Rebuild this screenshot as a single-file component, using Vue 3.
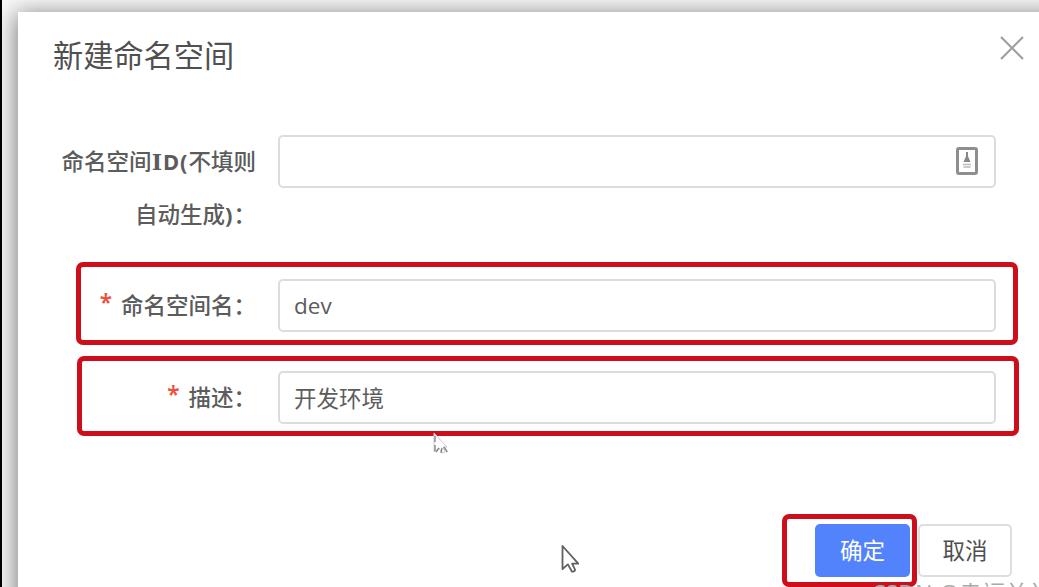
<script setup>
import { ref } from 'vue'

const namespaceId = ref('')
const fields = ref([
  { key: 'name', label: '命名空间名：', value: 'dev' },
  { key: 'desc', label: '描述：', value: '开发环境' }
])
</script>

<template>
  <div class="page">
    <section class="dialog">
      <header class="dialog-header">
        <h1 class="title">新建命名空间</h1>
        <svg class="close" viewBox="0 0 24 24" width="24" height="24">
          <path d="M1 1L23 23M23 1L1 23" />
        </svg>
      </header>

      <div class="form-row">
        <label class="label">命名空间<span class="latin"><span class="slab">I</span>D(</span>不填则<br />自动生成<span class="latin">)</span>：</label>
        <div class="field">
          <input v-model="namespaceId" type="text" />
          <svg class="badge" viewBox="0 0 24 30" width="24" height="30">
            <rect x="2.5" y="2.5" width="19" height="25" rx="1.5" class="badge-frame" />
            <path d="M12 6v5" class="badge-stem" />
            <path d="M12 8l3.5 8h-7z" class="badge-fill" />
            <path d="M8 18.5h8M8.5 21h7" class="badge-line" />
          </svg>
        </div>
      </div>

      <div v-for="f in fields" :key="f.key" class="form-row marked" :class="f.key">
        <label class="label"><span class="star">*</span>{{ f.label }}</label>
        <div class="field">
          <input v-model="f.value" type="text" />
        </div>
      </div>

      <footer class="dialog-footer">
        <div class="confirm-mark">
          <button class="btn primary">确定</button>
        </div>
        <button class="btn">取消</button>
      </footer>
    </section>

    <!-- 鼠标指针 -->
    <svg class="pointer ghost" viewBox="0 0 20 24" width="20" height="24">
      <path class="ghost-body" d="M4 1v19l5-4 3 5 3-1-2-5h4z" />
      <path class="ghost-dash" d="M5 4v18M9 16l-3 4M12 16l-1 5M14 15l4 6" />
    </svg>
    <svg class="pointer" viewBox="0 0 20 30" width="20" height="30">
      <path d="M3.5 2v23l5.4-4.6 4 7.1q2.6 .6 3.2-1.6l-3-6.2h6.2z" />
    </svg>
    <div class="watermark">CSDN @幸福兰兰</div>
  </div>
</template>

<style>
body {
  margin: 0;
  overflow: hidden;
}
</style>

<style scoped>
.page {
  position: relative;
  box-sizing: border-box;
  width: 1039px;
  height: 587px;
  padding: 12px 0 0 16px;
  overflow: hidden;
  border-left: 2px solid #000;
  background: #f8f8f8;
  font-family: "Noto Sans", "Noto Sans CJK SC", sans-serif;
  color: #5c5c5c;
}

.dialog {
  width: 1040px;
  height: 620px;
  background: #fff;
  box-shadow: 0 4px 22px 2px rgba(0, 0, 0, 0.5);
}

.dialog-header {
  display: flex;
  justify-content: space-between;
  height: 123px;
  padding: 0 34px 0 35px;
}

.title {
  margin: 20px 0 0;
  font-size: 30.2px;
  line-height: 44px;
  font-weight: 400;
  font-family: "Noto Sans CJK SC", sans-serif;
  color: #505050;
}

.close {
  margin-top: 24px;
  fill: none;
  stroke: #a0a0a0;
  stroke-width: 2.2;
}

/* ===== 表单 ===== */
.form-row {
  display: flex;
  box-sizing: border-box;
}

.label {
  flex: none;
  width: 238px;
  font-size: 22.5px;
  line-height: 53px;
  font-weight: 500;
  text-align: right;
  white-space: nowrap;
}

.latin {
  font-family: "Noto Sans", sans-serif;
  font-size: 22px;
  font-weight: 700;
  letter-spacing: 1px;
  line-height: 1;
}

.slab {
  font-family: "DejaVu Serif", serif;
  font-weight: 700;
}

.star {
  position: relative;
  top: -3px;
  margin-right: 9px;
  font-weight: 600;
  line-height: 1;
  color: #f0503a;
}

.field {
  position: relative;
  width: 718px;
  height: 53px;
  margin-left: 22px;
}

.field input {
  box-sizing: border-box;
  width: 100%;
  height: 100%;
  padding: 0 14px;
  border: 2px solid #dcdcdc;
  border-radius: 5px;
  outline: none;
  background: #fff;
  color: #5c5c5c;
  font: 400 22.5px "Open Sans", "Noto Sans CJK SC", sans-serif;
}

.badge {
  position: absolute;
  top: 11px;
  right: 17px;
}
.badge-frame { fill: #fff; stroke: #8e8e8e; stroke-width: 3; }
.badge-stem { stroke: #888; stroke-width: 2; }
.badge-fill { fill: #888; }
.badge-line { stroke: #bbb; stroke-width: 1.5; }

/* 红框标注 */
.marked {
  border: 5px solid #cc0f1b;
  border-radius: 7px;
}

.marked.name {
  width: 942px;
  height: 83px;
  margin: 21px 0 0 58px;
  padding: 12px 0 0;
}

.marked.desc {
  width: 942px;
  height: 80px;
  margin: 11px 0 0 59px;
  padding: 10px 0 0;
}

.marked.name .label { width: 175px; }
.marked.desc .label { width: 174px; }

/* ===== 底部按钮 ===== */
.dialog-footer {
  display: flex;
  margin: 78px 0 0 764px;
}

.confirm-mark {
  box-sizing: border-box;
  width: 135px;
  height: 73px;
  padding: 5px 0 0 28px;
  border: 5px solid #cc0f1b;
  border-radius: 7px;
}

.btn {
  box-sizing: border-box;
  width: 94px;
  height: 53px;
  margin: 10px 0 0 1px;
  padding: 0 0 4px;
  border: 2px solid #dedede;
  border-radius: 5px;
  background: #fff;
  color: #505050;
  font: 400 22.5px "Noto Sans CJK SC", sans-serif;
}

.btn.primary {
  width: 95px;
  margin: 0;
  border: none;
  background: #5282fc;
  color: #fff;
}

.pointer {
  position: absolute;
  left: 557px;
  top: 544px;
  fill: #fff;
  stroke: #606060;
  stroke-width: 1.8;
  stroke-linejoin: round;
}

.pointer.ghost {
  left: 428px;
  top: 432px;
}
.ghost-body { stroke: #ccc; stroke-width: 1; }
.ghost-dash { stroke: #888; stroke-width: 1.4; stroke-dasharray: 6 3; fill: none; }

.watermark {
  position: absolute;
  left: 869px;
  top: 578px;
  font-size: 23px;
  line-height: 30px;
  white-space: nowrap;
  color: #aaa;
}
</style>
